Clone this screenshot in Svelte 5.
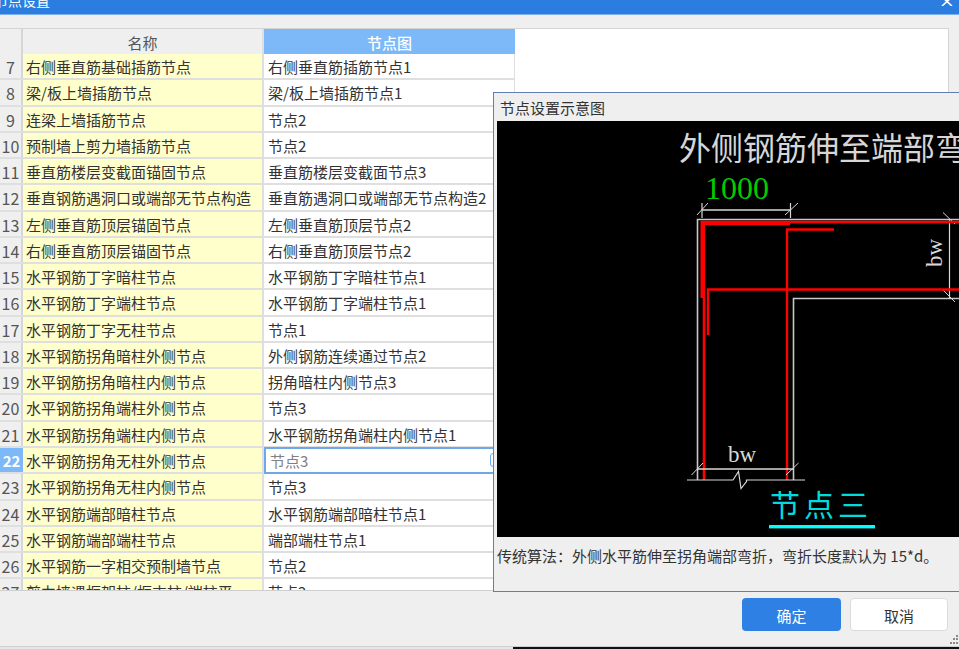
<script lang="ts">
  const rows = [
    [7, '右侧垂直筋基础插筋节点', '右侧垂直筋插筋节点1'],
    [8, '梁/板上墙插筋节点', '梁/板上墙插筋节点1'],
    [9, '连梁上墙插筋节点', '节点2'],
    [10, '预制墙上剪力墙插筋节点', '节点2'],
    [11, '垂直筋楼层变截面锚固节点', '垂直筋楼层变截面节点3'],
    [12, '垂直钢筋遇洞口或端部无节点构造', '垂直筋遇洞口或端部无节点构造2'],
    [13, '左侧垂直筋顶层锚固节点', '左侧垂直筋顶层节点2'],
    [14, '右侧垂直筋顶层锚固节点', '右侧垂直筋顶层节点2'],
    [15, '水平钢筋丁字暗柱节点', '水平钢筋丁字暗柱节点1'],
    [16, '水平钢筋丁字端柱节点', '水平钢筋丁字端柱节点1'],
    [17, '水平钢筋丁字无柱节点', '节点1'],
    [18, '水平钢筋拐角暗柱外侧节点', '外侧钢筋连续通过节点2'],
    [19, '水平钢筋拐角暗柱内侧节点', '拐角暗柱内侧节点3'],
    [20, '水平钢筋拐角端柱外侧节点', '节点3'],
    [21, '水平钢筋拐角端柱内侧节点', '水平钢筋拐角端柱内侧节点1'],
    [22, '水平钢筋拐角无柱外侧节点', '节点3'],
    [23, '水平钢筋拐角无柱内侧节点', '节点3'],
    [24, '水平钢筋端部暗柱节点', '水平钢筋端部暗柱节点1'],
    [25, '水平钢筋端部端柱节点', '端部端柱节点1'],
    [26, '水平钢筋一字相交预制墙节点', '节点2'],
    [27, '剪力墙遇框架柱/框支柱/端柱平', '节点2']
  ];
  const selected = 22;
</script>

<div class="dialog">
  <div class="titlebar">
    <span class="title">节点设置</span>
    <svg class="close" width="12" height="6" viewBox="0 0 12 6">
      <path d="M1 -3 L11 6 M11 -3 L1 6" stroke="#fff" stroke-width="1.6" fill="none" />
    </svg>
  </div>
  <div class="toolbar"></div>

  <div class="table">
    <div class="row head">
      <div class="num"></div>
      <div class="name">名称</div>
      <div class="node">节点图</div>
    </div>
    {#each rows as r}
      <div class="row" class:sel={r[0] === selected}>
        <div class="num">{r[0]}</div>
        <div class="name">{r[1]}</div>
        <div class="node">
          {r[2]}
          {#if r[0] === selected}<span class="pick"></span>{/if}
        </div>
      </div>
    {/each}
  </div>

  <div class="footer">
    <button class="ok">确定</button>
    <button class="cancel">取消</button>
    <svg class="grip" width="10" height="11" viewBox="0 0 10 11">
      <g fill="#8a8a8a">
        <rect x="7" y="1" width="2" height="2" />
        <rect x="4" y="4" width="2" height="2" />
        <rect x="7" y="4" width="2" height="2" />
        <rect x="1" y="8" width="2" height="2" />
        <rect x="4" y="8" width="2" height="2" />
        <rect x="7" y="8" width="2" height="2" />
      </g>
    </svg>
  </div>

  <div class="behind">
    <div class="behind-text">
      <span style="width: 75px">楼层</span>
      <span style="width: 45px">名称</span>
      <span style="width: 115px">钢筋类型</span>
      <span style="width: 80px">数据</span>
    </div>
    <div class="behind-dark"></div>
  </div>

  <div class="popup">
    <div class="popup-title">节点设置示意图</div>
    <svg class="sketch" width="470" height="416" viewBox="497 121 470 416">
      <rect x="497" y="121" width="470" height="416" fill="#000" />
      <text x="679" y="160" class="t-title">外侧钢筋伸至端部弯折</text>
      <text x="705" y="199" class="t-dim">1000</text>

      <!-- wall outline -->
      <g stroke="#c8c8c8" stroke-width="1.6" fill="none">
        <path d="M697.5 480 V219.5 H970" />
        <path d="M793.5 480 V298.5 H970" />
      </g>

      <!-- top dimension -->
      <g stroke="#d8d8d8" stroke-width="1" fill="none">
        <path d="M702 203 V218 M790.5 203 V218" stroke-width="1.2" />
        <path d="M702 210 H790.5" stroke-width="1.4" />
        <path d="M697 215 L708 203 M785 215 L798 203" />
      </g>

      <!-- right dimension -->
      <g stroke="#d8d8d8" stroke-width="1" fill="none">
        <path d="M949.5 220 V299" stroke-width="1.2" />
        <path d="M943 212.5 L955 224 M943 290 L955 302" />
      </g>
      <text x="0" y="0" class="t-bw" transform="translate(942 267) rotate(-90)">bw</text>

      <!-- rebar -->
      <g fill="none" stroke="#ff0000">
        <path d="M701 223 H790" stroke-width="4.4" />
        <path d="M702.8 221 V298" stroke-width="4.6" />
        <path d="M790 222 H970" stroke-width="2.4" />
        <path d="M704 298 V480" stroke-width="2.6" />
        <path d="M787 480 V229.5 H834" stroke-width="2.4" />
        <path d="M708 335 V289.5 H970" stroke-width="2.4" />
      </g>

      <!-- bottom dimension -->
      <text x="728" y="462" class="t-low">bw</text>
      <g stroke="#d8d8d8" stroke-width="1" fill="none">
        <path d="M697 469 H793.5" stroke-width="1.4" />
        <path d="M691.5 475 L703 463 M786 475 L798.5 463" />
        <path d="M687 480 H733 L738.5 471.5 L741 488.5 L746.5 481.5 V480 H805" stroke-width="1.2" />
      </g>

      <text x="770" y="516" class="t-node">节点三</text>
      <rect x="769" y="525" width="106" height="3.4" fill="#00ffff" />
    </svg>
    <div class="note">传统算法：外侧水平筋伸至拐角端部弯折，弯折长度默认为 15*d。</div>
  </div>
</div>

<style>
  :global(body) {
    margin: 0;
    overflow: hidden;
  }

  .dialog {
    position: relative;
    width: 959px;
    height: 649px;
    display: flex;
    flex-direction: column;
    background: #efefef;
    overflow: hidden;
    font-family: "Noto Sans CJK SC", "Liberation Sans", sans-serif;
    font-size: 15px;
    color: #333;
  }

  .titlebar {
    flex: none;
    position: relative;
    height: 14px;
    background: #2b7de0;
    border-bottom: 1px solid #7fb2ec;
    overflow: hidden;
  }

  .title {
    position: absolute;
    left: -6px;
    top: -11px;
    line-height: 22px;
    font-size: 14px;
    color: #fff;
  }

  .close {
    position: absolute;
    left: 941px;
    top: 0;
  }

  .toolbar {
    flex: none;
    height: 13px;
  }

  .table {
    flex: none;
    height: 563px;
    margin-right: 10px;
    background: #fff;
    border-top: 1px solid #d4d4d4;
    border-right: 1px solid #d4d4d4;
    border-bottom: 1px solid #cfcfcf;
    box-sizing: border-box;
    overflow: hidden;
  }

  .row {
    display: grid;
    grid-template-columns: 23px 241px 251px;
    grid-template-rows: minmax(0, 1fr);
    width: 515px;
    height: 26.27px;
    box-sizing: border-box;
    border-bottom: 2px solid #dfdfdf;
    line-height: 26px;
    white-space: nowrap;
  }

  .row.head {
    height: 25px;
    border-bottom: none;
    line-height: 28px;
    text-align: center;
    color: #555;
  }

  .num {
    background: #efefef;
    border-right: 2px solid #d6d6d6;
    box-sizing: border-box;
    text-align: center;
    color: #555;
    font-size: 16px;
    overflow: hidden;
  }

  .name {
    background: #ffffcc;
    border-right: 2px solid #dfdfdf;
    box-sizing: border-box;
    padding-left: 3px;
    overflow: hidden;
  }

  .node {
    position: relative;
    padding-left: 4px;
    background: #fff;
    border-right: 1px solid #dfdfdf;
    overflow: hidden;
  }

  .head .name {
    background: #efefef;
    padding: 0;
  }

  .head .node {
    background: #7db8f8;
    color: #fff;
    padding: 0;
    border-right: none;
    font-weight: 500;
  }

  .sel .num {
    background: #7db8f8;
    color: #fff;
    font-weight: 700;
    font-size: 15px;
    border-right: none;
  }

  .sel .node {
    margin-top: -1px;
    height: 27px;
    box-sizing: border-box;
    border: 2px solid #6ea8e6;
    padding-left: 4px;
    color: #808080;
    line-height: 23px;
  }

  .pick {
    position: absolute;
    left: 224px;
    top: 4px;
    width: 6px;
    height: 12px;
    border: 1.5px solid #6ea8e6;
    border-radius: 3px;
  }

  .footer {
    flex: 1;
    position: relative;
    display: flex;
    justify-content: flex-end;
    align-items: flex-start;
    gap: 9px;
    padding: 7px 11px 0 0;
  }

  .footer button {
    height: 33px;
    border-radius: 4px;
    font-family: inherit;
    font-size: 15px;
    padding: 1px 0 0;
  }

  .ok {
    width: 99px;
    background: #2e80e4;
    border: none;
    color: #fff;
  }

  .cancel {
    width: 98px;
    background: #fff;
    border: 1px solid #dcdcdc;
    color: #333;
  }

  .grip {
    position: absolute;
    right: 0;
    bottom: 1px;
  }

  .behind {
    flex: none;
    display: flex;
    height: 3px;
    border-top: 1px solid #cfcfcf;
    box-sizing: border-box;
    overflow: hidden;
  }

  .behind-text {
    width: 513px;
    display: flex;
    padding-left: 12px;
    box-sizing: border-box;
    background: #e6e6e6;
    font-size: 13px;
    line-height: 15px;
    color: #222;
  }

  .behind-text span {
    display: block;
    flex: none;
  }

  .behind-dark {
    flex: 1;
    background: #111;
  }

  .popup {
    position: absolute;
    left: 493px;
    top: 92px;
    width: 470px;
    height: 500px;
    box-sizing: border-box;
    background: #efefef;
    border: 1px solid #5f7fae;
    overflow: hidden;
  }

  .popup-title {
    height: 28px;
    padding-left: 6px;
    line-height: 30px;
    color: #333;
  }

  .sketch {
    display: block;
    margin-left: 3px;
  }

  .note {
    margin-left: 3px;
    line-height: 38px;
    white-space: nowrap;
    color: #333;
  }

  .t-title {
    font-size: 32px;
    fill: #d6d6d6;
  }

  .t-dim {
    font-family: "Liberation Serif", serif;
    font-size: 32px;
    fill: #00cc00;
  }

  .t-bw {
    font-family: "Liberation Serif", serif;
    font-size: 23px;
    fill: #d8d8d8;
  }

  .t-low {
    font-family: "Liberation Serif", serif;
    font-size: 23px;
    fill: #d8d8d8;
  }

  .t-node {
    font-size: 30px;
    letter-spacing: 4px;
    fill: #00dcdc;
  }
</style>
